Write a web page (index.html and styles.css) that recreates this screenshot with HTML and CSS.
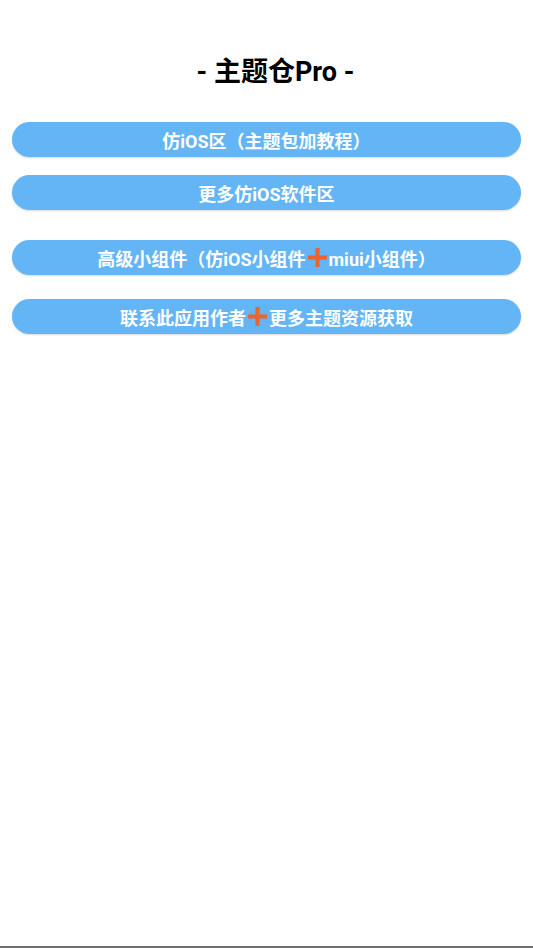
FILE: index.html
```html
<!DOCTYPE html>
<html lang="zh">
<head>
<meta charset="utf-8">
<link rel="stylesheet" href="styles.css">
</head>
<body>
<div class="page">
  <main class="content">
    <h1 class="title">- 主题仓Pro -</h1>
    <div class="btn b1">仿iOS区（主题包加教程）</div>
    <div class="btn b2">更多仿iOS软件区</div>
    <div class="btn b3">高级小组件（仿iOS小组件<svg class="plus" viewBox="0 0 20 20"><rect x="8" y="1" width="4" height="18" fill="#e8652c"/><rect x="1" y="8" width="18" height="4" fill="#e8652c"/></svg>miui小组件）</div>
    <div class="btn b4">联系此应用作者<svg class="plus" viewBox="0 0 20 20"><rect x="8" y="1" width="4" height="18" fill="#e8652c"/><rect x="1" y="8" width="18" height="4" fill="#e8652c"/></svg>更多主题资源获取</div>
  </main>
  <div class="bottom"></div>
</div>
</body>
</html>
```
FILE: styles.css
```css
html, body {
  margin: 0;
  padding: 0;
  background: #ffffff;
}
.page {
  min-height: 100vh;
  display: flex;
  flex-direction: column;
  font-family: Roboto, "Noto Sans CJK SC", sans-serif;
}
.content {
  flex: 1;
  display: flex;
  flex-direction: column;
  padding: 0 12px;
}
.title {
  margin: 0;
  height: 122px;
  padding-top: 53px;
  padding-left: 18px;
  box-sizing: border-box;
  text-align: center;
  font-size: 27px;
  line-height: 38px;
  font-weight: 700;
  color: #000;
}
.btn {
  height: 35px;
  border-radius: 18px;
  background: #64b5f6;
  box-shadow: 0 1px 2px rgba(0,0,0,0.15);
  color: #fff;
  font-size: 18px;
  font-weight: 700;
  display: flex;
  align-items: center;
  justify-content: center;
  white-space: nowrap;
}
.b2 { margin-top: 18px; }
.b3 { margin-top: 30px; }
.b4 { margin-top: 24px; }
.plus {
  width: 21px;
  height: 21px;
  margin: 0 1px;
}
.bottom {
  height: 2px;
  background: #6e6e6e;
}
```
